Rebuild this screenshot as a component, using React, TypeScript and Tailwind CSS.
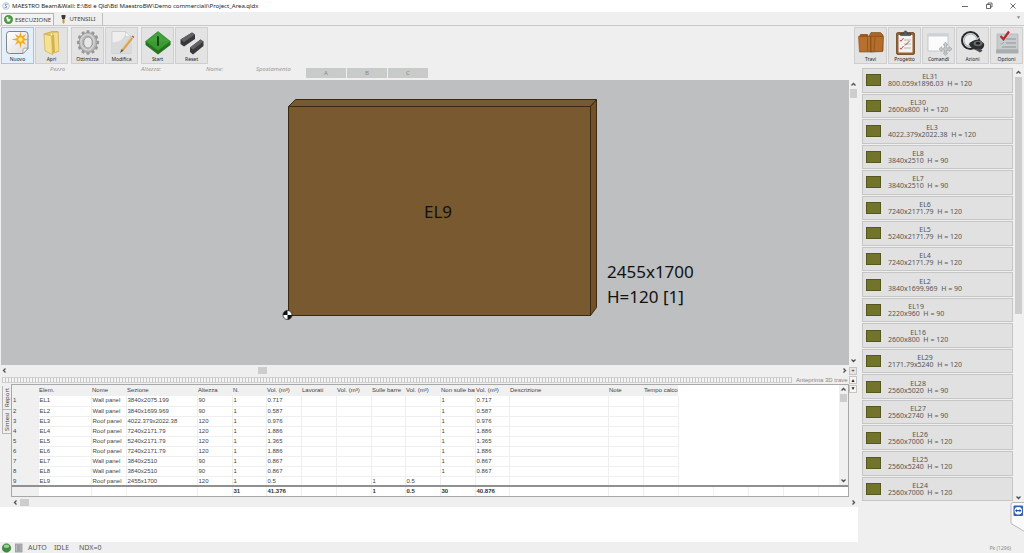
import React, { useState } from "react";

type Item = { name: string; size: string; h: number };

const items: Item[] = [
  { name: "EL31", size: "800.059x1896.03", h: 120 },
  { name: "EL30", size: "2600x800", h: 120 },
  { name: "EL3", size: "4022.379x2022.38", h: 120 },
  { name: "EL8", size: "3840x2510", h: 90 },
  { name: "EL7", size: "3840x2510", h: 90 },
  { name: "EL6", size: "7240x2171.79", h: 120 },
  { name: "EL5", size: "5240x2171.79", h: 120 },
  { name: "EL4", size: "7240x2171.79", h: 120 },
  { name: "EL2", size: "3840x1699.969", h: 90 },
  { name: "EL19", size: "2220x960", h: 90 },
  { name: "EL16", size: "2600x800", h: 120 },
  { name: "EL29", size: "2171.79x5240", h: 120 },
  { name: "EL28", size: "2560x5020", h: 90 },
  { name: "EL27", size: "2560x2740", h: 90 },
  { name: "EL26", size: "2560x7000", h: 120 },
  { name: "EL25", size: "2560x5240", h: 120 },
  { name: "EL24", size: "2560x7000", h: 120 },
];

const headers = [
  "", "Elem.", "Nome", "Sezione", "Altezza", "N.", "Vol. (m³)", "Lavorati", "Vol. (m³)",
  "Sulle barre", "Vol. (m³)", "Non sulle bar", "Vol. (m³)", "Descrizione", "Note", "Tempo calcol",
];

const row = (i: number, name: string, size: string, h: string, vol: string, placed = false) => [
  String(i), "EL" + i, name, size, h, "1", vol, "", "",
  placed ? "1" : "", placed ? vol : "", placed ? "" : "1", placed ? "" : vol, "", "", "",
];

const rows = [
  row(1, "Wall panel", "3840x2075.199", "90", "0.717"),
  row(2, "Wall panel", "3840x1699.969", "90", "0.587"),
  row(3, "Roof panel", "4022.379x2022.38", "120", "0.976"),
  row(4, "Roof panel", "7240x2171.79", "120", "1.886"),
  row(5, "Roof panel", "5240x2171.79", "120", "1.365"),
  row(6, "Roof panel", "7240x2171.79", "120", "1.886"),
  row(7, "Wall panel", "3840x2510", "90", "0.867"),
  row(8, "Wall panel", "3840x2510", "90", "0.867"),
  row(9, "Roof panel", "2455x1700", "120", "0.5", true),
];

const totals = ["", "", "", "", "", "31", "41.376", "", "", "1", "0.5", "30", "40.876", "", "", "", "", "", "", "", ""];

function Columns({ extended }: { extended?: boolean }) {
  return (
    <colgroup>
      <col className="w-[26px]" />
      <col className="w-[53px]" />
      <col className="w-[35px]" />
      <col className="w-[71px]" />
      <col className="w-[35px]" />
      <col className="w-[34px]" />
      <col className="w-[35px]" />
      <col className="w-[35px]" />
      <col className="w-[35px]" />
      <col className="w-[34px]" />
      <col className="w-[35px]" />
      <col className="w-[35px]" />
      <col className="w-[34px]" />
      <col className="w-[99px]" />
      <col className="w-[35px]" />
      <col className="w-[35px]" />
      {extended && (
        <>
          <col className="w-[35px]" />
          <col className="w-[35px]" />
          <col className="w-[35px]" />
          <col className="w-[35px]" />
          <col />
        </>
      )}
    </colgroup>
  );
}

function Arrow({ dir }: { dir: "up" | "down" | "left" | "right" }) {
  const d = {
    up: "M2.500 5.500 4.500 3.500 6.500 5.500",
    down: "M2.500 3.500 4.500 5.500 6.500 3.500",
    left: "M5.500 2.500 3.500 4.500 5.500 6.500",
    right: "M3.500 2.500 5.500 4.500 3.500 6.500",
  }[dir];
  return (
    <button aria-label={dir} className="block size-[9px] shrink-0">
      <svg viewBox="0 0 9 9" className="size-[9px]" fill="none" stroke="#505050" strokeWidth="1.3">
        <path d={d} />
      </svg>
    </button>
  );
}

function VScroll({ thumb }: { thumb: string }) {
  return (
    <div className="flex w-[9px] shrink-0 flex-col bg-[#f0f0f0]">
      <Arrow dir="up" />
      <div className="min-h-0 flex-1">
        <div className={"mx-px bg-[#cdcdcd] " + thumb} />
      </div>
      <Arrow dir="down" />
    </div>
  );
}

function ToolButton({ label, active, children }: { label: string; active?: boolean; children: React.ReactNode }) {
  return (
    <button
      className={
        "flex h-[37px] w-[33px] flex-col items-center border pt-[2px] " +
        (active ? "border-[#a3c4e6] bg-[#e3effa]" : "border-[#cfcfcf] bg-[#e3e3e3]")
      }
    >
      <svg viewBox="0 0 28 26" className="h-[26px] w-[28px]">{children}</svg>
      <span className="text-[5px] leading-[7px] text-[#222]">{label}</span>
    </button>
  );
}

const gearTeeth = Array.from({ length: 12 }, (_, i) => i * 30);

function NewIcon() {
  return (
    <>
      <defs>
        <linearGradient id="paper" x1="0" y1="0" x2="1" y2="1">
          <stop offset="0" stopColor="#ffffff" />
          <stop offset="1" stopColor="#dcdcdc" />
        </linearGradient>
      </defs>
      <path d="M5 1.5h16a3 3 0 0 1 3 3v14l-5 5H5.500a3 3 0 0 1-3-3V4.500a3 3 0 0 1 2.500-3z" fill="url(#paper)" stroke="#777" strokeWidth="0.9" />
      <path d="M24 18.500c-2-.6-4-.4-4.600.3-.6.700-.4 3-.4 4.700z" fill="#f8f8f8" stroke="#888" strokeWidth="0.7" />
      <path d="m16.500 1.500 1.200 5 4.300-2.600-2.500 4.400 6 1.200-6 1.300 2.500 4.300-4.300-2.500-1.200 6-1.300-6-4.300 2.500 2.500-4.300-6-1.300 6-1.200-2.500-4.400 4.300 2.600z" fill="#f0a818" />
      <circle cx="16.500" cy="9.500" r="2.300" fill="#ffe27a" />
    </>
  );
}

function OpenIcon() {
  return (
    <>
      <path d="M6 4 14 1.500h6l.5 20L12 23z" fill="#e4c766" stroke="#b99a3d" strokeWidth="0.6" />
      <path d="M13 3.500 19 2v19l-6 1.500z" fill="#faf3d2" />
      <path d="m14.500 3 5.500-1 1 19-5.500 2z" fill="#f1dc8c" stroke="#c9aa4c" strokeWidth="0.5" />
      <path d="m6 4 7.500 1.800 1 18.700L7 21z" fill="#f5e28f" stroke="#c3a448" strokeWidth="0.6" />
      <path d="M13.500 5.800 16 4.500 17 22l-2.500 2.500z" fill="#d2b14e" />
    </>
  );
}

function GearIcon() {
  return (
    <>
      <g fill="#999" transform="translate(14 12.500) scale(.9 1)">
        {gearTeeth.map((a) => (
          <rect key={a} x="-1.700" y="-12.300" width="3.400" height="5" rx="0.800" transform={`rotate(${a})`} />
        ))}
      </g>
      <ellipse cx="14" cy="12.500" rx="9" ry="10" fill="#b6b6b6" stroke="#8d8d8d" strokeWidth="0.6" />
      <ellipse cx="13.500" cy="12" rx="6.600" ry="7.600" fill="none" stroke="#d2d2d2" strokeWidth="1.600" />
      <ellipse cx="14" cy="12.500" rx="4.300" ry="5.600" fill="#e7e7e7" stroke="#868686" strokeWidth="0.8" />
    </>
  );
}

function EditIcon() {
  return (
    <>
      <path d="M4 1.500h13l6 5v17H4z" fill="#eeeeee" stroke="#c4c4c4" strokeWidth="0.7" />
      <path d="M4 23.500V12c6 1 12-2 14-10l5 5v16.500z" fill="#d9dadb" />
      <path d="M17 1.500c1 2 .7 4 .2 5 2-.5 4-.4 5.800.3z" fill="#fafafa" stroke="#c0c0c0" strokeWidth="0.5" />
      <path d="m24 8-9.500 12" stroke="#d9a04e" strokeWidth="2.600" />
      <path d="m23.300 7.500-9.500 12" stroke="#f0c880" strokeWidth="0.8" />
      <path d="m13.500 19 2 1.700-3.500 2.300z" fill="#555" />
      <path d="m23.500 6.500 2 1.700.8-1.500-1.400-1.200z" fill="#bd5a4a" />
    </>
  );
}

function StartIcon() {
  return (
    <>
      <path d="M1.500 11.500v3.500L14 24.500 26.500 15v-3.500z" fill="#26731f" />
      <path d="M14 1.500 26.500 11.500 14 20.500 1.500 11.500z" fill="#3b9a32" stroke="#2c7d26" strokeWidth="0.6" />
      <path d="M14 2.500 24.800 11.500H3.200z" fill="#49a83e" opacity=".6" />
      <path d="M14 6.200v9.600" stroke="#173f14" strokeWidth="1.800" />
    </>
  );
}

function ResetIcon() {
  return (
    <g strokeLinejoin="round">
      <path d="M2.500 9.500 14 2.500l3 2v4.500L6 16.500l-3.500-2.500z" fill="#38393b" />
      <path d="M2.500 9.500 14 2.500l3 2L6 12z" fill="#606265" />
      <path d="M12 17.500 22.500 9.500l3 2V16L15 24.500 12 22z" fill="#38393b" />
      <path d="M12 17.500 22.500 9.500l3 2L15 19.500z" fill="#606265" />
    </g>
  );
}

function FolderIcon() {
  return (
    <>
      <path d="M2 6.500 3.500 4h7l1.500 2.500V22H3.500z" fill="#9b5a20" />
      <path d="M12.500 5 14 2.500h9.500L26 5v16L13 22z" fill="#a9652a" stroke="#7c4413" strokeWidth="0.6" />
      <path d="M1.500 6.500h12V22H2.500z" fill="#b8702e" stroke="#83490f" strokeWidth="0.6" />
      <path d="M14 6.500h12.500L25.500 21.500 14 22z" fill="#b56d2c" stroke="#83490f" strokeWidth="0.6" />
      <path d="M10.500 7.500v14M18 7l-1 14.500" stroke="#8f5318" strokeWidth="0.8" />
    </>
  );
}

function ClipboardIcon() {
  return (
    <>
      <rect x="5.500" y="2.500" width="18" height="22" rx="1.500" fill="#9a5f2e" stroke="#5e3815" strokeWidth="0.7" />
      <path d="M7.500 5h14v17.500h-14z" fill="#f4f2ee" />
      <path d="M9.500 5.500V3.500h3c0-3.500 4-3.500 4 0h3v2z" fill="#555b60" stroke="#34383c" strokeWidth="0.6" />
      <path d="M13 10h7M13 14h7M13 18h7" stroke="#a8a8a8" strokeWidth="0.8" />
      <path d="m9 10 1 1.300L12.500 8M9 18l1 1.300 2.500-3.300" stroke="#c0504d" strokeWidth="1" fill="none" />
      <path d="m14 15.500 4.500-4.500" stroke="#8c5a50" strokeWidth="1" />
    </>
  );
}

function CommandsIcon() {
  return (
    <>
      <rect x="3" y="4" width="20" height="17" fill="#fbfbfb" stroke="#b4b8bb" strokeWidth="0.7" />
      <path d="M3 4h20v2.500H3z" fill="#cdd1d4" />
      <path d="m20.500 12 2.300 3h-1.300v3h3v-1.300l2.500 2.300-2.500 2.300V20h-3v3h1.300l-2.300 2.500-2.300-2.500h1.300v-3h-3v1.300L14 19l2.500-2.300V18h3v-3h-1.300z" fill="#c8cbce" stroke="#8d9297" strokeWidth="0.5" />
    </>
  );
}

function ActionsIcon() {
  return (
    <>
      <circle cx="11.500" cy="10.500" r="8.500" fill="#eceeef" stroke="#29292b" strokeWidth="2" />
      <circle cx="11.500" cy="10.500" r="6.400" fill="none" stroke="#9da1a4" strokeWidth="0.8" />
      <path d="M8 16 21 7" stroke="#c4c8ca" strokeWidth="1.200" />
      <path d="M10 14c2-3 7-5 11-4l4 3.500c.7 3-1 6-5 6.500-4 .4-9-2-10-6z" fill="#2d2e30" />
      <ellipse cx="19" cy="13.500" rx="4.500" ry="2.700" fill="#64686b" />
      <ellipse cx="19" cy="13.200" rx="2.200" ry="1.200" fill="#1d1d1f" />
      <path d="m15 19 6 3.500 2.500-1.700-2-2z" fill="#4a4c4f" />
    </>
  );
}

function OptionsIcon() {
  return (
    <>
      <path d="M4 4h21v15.500H4z" fill="#c9cccd" stroke="#a9acae" strokeWidth="0.6" />
      <path d="M3 19.500h22.500v4H3z" fill="#a9adaf" />
      <path d="M13 9h10M13 13h10M9 17h14" stroke="#8b9093" strokeWidth="0.900" />
      <path d="m7.500 6 3 3.200L16 1.500" stroke="#b6262c" strokeWidth="2.200" fill="none" />
      <path d="m7.500 13 1.200 1.200L11 12" stroke="#9da1a3" strokeWidth="0.900" fill="none" />
    </>
  );
}

function Tab({ label, width, selected, onClick, children }: { label: string; width: string; selected: boolean; onClick: () => void; children: React.ReactNode }) {
  return (
    <button
      onClick={onClick}
      className={
        "flex h-[12px] items-center justify-center gap-[2px] border-r text-[6px] leading-[10px] text-[#444] " +
        width + " " +
        (selected ? "border-t border-l border-[#b4b4b4] bg-[#f3f3f3]" : "border-[#bdbdbd]")
      }
    >
      {children}
      {label}
    </button>
  );
}

function PanelDrawing() {
  return (
    <svg viewBox="0 0 848 283" className="absolute inset-0 size-full" fontFamily='"Noto Sans", sans-serif' fontSize="17" fill="#111">
      <g stroke="#3b2a12" strokeWidth="1" strokeLinejoin="round">
        <path d="M287.500 25.500 294.500 18.500H595.500L589.500 25.500z" fill="#775a31" />
        <path d="M589.500 25.500 595.500 18.500V226.500L589.500 234.500z" fill="#745228" />
        <path d="M287.500 25.500H589.500V234.500H287.500z" fill="#785930" />
      </g>
      <text x="437" y="137" textAnchor="middle">EL9</text>
      <text x="606" y="197">2455x1700</text>
      <text x="606" y="222">H=120 [1]</text>
      <circle cx="286.500" cy="234" r="4.500" fill="#fff" stroke="#111" strokeWidth="0.700" />
      <path d="M286.500 234h-4.500a4.500 4.500 0 0 1 4.500-4.500zM286.500 234h4.500a4.500 4.500 0 0 1-4.500 4.500z" />
    </svg>
  );
}

export default function App() {
  const [tab, setTab] = useState("ESECUZIONE");
  return (
    <div className="flex min-h-screen flex-col overflow-hidden bg-[#efefef] font-['Noto_Sans','Open_Sans',sans-serif] text-[7px] leading-[8px] text-[#444]">
      <header className="flex h-[12px] items-center bg-white pl-[2px]">
        <svg viewBox="0 0 8 8" className="size-[8px]" fill="none" stroke="#8fb0c8">
          <circle cx="4" cy="4" r="3.300" strokeWidth="0.700" />
          <path d="M5.500 2.500c-3-1-3 1-1.500 1.500s1.500 2-1.500 1.300" stroke="#5b8cb0" />
        </svg>
        <h1 className="ml-[2px] flex-1 text-[6px] leading-[12px] whitespace-nowrap text-[#222]">
          MAESTRO Beam&amp;Wall: E:\Btl e Qld\Btl MaestroBW\Demo commerciali\Project_Area.qldx
        </h1>
        <div className="flex items-center gap-[16px] pr-[7px]">
          {["M1 4.500h6", "M1.500 2.500h4v4h-4zM3 2.500V1h4v4H5.500", "M1.500 1.500l5 5M6.500 1.500l-5 5"].map((d, i) => (
            <button key={d} aria-label={["Riduci", "Ripristina", "Chiudi"][i]}>
              <svg viewBox="0 0 8 8" className="size-[8px]" fill="none" stroke="#444" strokeWidth="0.800">
                <path d={d} />
              </svg>
            </button>
          ))}
        </div>
      </header>

      <nav className="flex h-[14px] items-start border-b border-[#c8c8c8] pt-px pl-px">
        <Tab label="ESECUZIONE" width="w-[53px]" selected={tab === "ESECUZIONE"} onClick={() => setTab("ESECUZIONE")}>
          <svg viewBox="0 0 9 9" className="size-[9px]">
            <circle cx="4.500" cy="4.500" r="4.200" fill="#4b9b3f" stroke="#39752f" strokeWidth="0.500" />
            <path d="m2 2.500 2.200-.8.300 2.300 2.300-.3-1 2.700-2.300.3z" fill="#e9f5e4" />
          </svg>
        </Tab>
        <Tab label="UTENSILI" width="w-[49px]" selected={tab === "UTENSILI"} onClick={() => setTab("UTENSILI")}>
          <svg viewBox="0 0 7 9" className="h-[9px] w-[7px]">
            <path d="M1.500 0h4v2.500H5V4H2V2.500h-.5z" fill="#3a3a3a" />
            <path d="M2.500 4h2v3.500L3.500 9l-1-1.500z" fill="#c79a35" />
          </svg>
        </Tab>
        <span className="ml-auto pr-[3px] text-[5px] text-[#888]">▼</span>
      </nav>

      <div className="flex items-start justify-between px-px pt-px">
        <div className="flex gap-[3px]">
          <div className="flex gap-px">
            <ToolButton label="Nuovo" active><NewIcon /></ToolButton>
            <ToolButton label="Apri"><OpenIcon /></ToolButton>
          </div>
          <div className="flex gap-px">
            <ToolButton label="Ottimizza"><GearIcon /></ToolButton>
            <ToolButton label="Modifica"><EditIcon /></ToolButton>
          </div>
          <div className="flex gap-px">
            <ToolButton label="Start"><StartIcon /></ToolButton>
            <ToolButton label="Reset"><ResetIcon /></ToolButton>
          </div>
        </div>
        <div className="flex gap-px">
          <ToolButton label="Travi"><FolderIcon /></ToolButton>
          <ToolButton label="Progetto"><ClipboardIcon /></ToolButton>
          <ToolButton label="Comandi"><CommandsIcon /></ToolButton>
          <ToolButton label="Azioni"><ActionsIcon /></ToolButton>
          <ToolButton label="Opzioni"><OptionsIcon /></ToolButton>
        </div>
      </div>

      <div className="relative flex flex-1">
        <main className="flex min-w-0 flex-1 flex-col">
          <div className="flex h-[16px] items-start pl-[50px] text-[6px] text-[#999] italic">
            <span className="w-[91px] pt-px">Pezzo</span>
            <span className="w-[65px] pt-px">Altezza:</span>
            <span className="w-[50px] pt-px">Nome:</span>
            <span className="w-[50px] pt-px">Spostamento</span>
            <div className="flex gap-px pt-[4px] not-italic">
              {["A", "B", "C"].map((l) => (
                <button key={l} className="h-[10px] w-[40px] bg-[#c9caca] leading-[10px] text-[#888]">{l}</button>
              ))}
            </div>
          </div>

          <div className="flex min-h-[200px] flex-1">
            <section className="relative ml-px flex-1 bg-[#bdbfc1]">
              <PanelDrawing />
            </section>
            <VScroll thumb="h-[9px]" />
          </div>

          <div className="flex">
            <div className="min-w-0 flex-1">
              <div className="flex h-[10px] items-center">
                <Arrow dir="left" />
                <div className="flex flex-1 justify-center">
                  <div className="mr-[324px] h-[7px] w-[9px] bg-[#cdcdcd]" />
                </div>
                <Arrow dir="right" />
              </div>
              <div className="flex h-[9px] items-center gap-[4px] pl-[2px]">
                <div className="h-[6px] flex-1 border-y border-[#d0d0d0] bg-[repeating-linear-gradient(90deg,#c6c6c6_0_1px,#f4f4f4_1px_3px)]" />
                <span className="w-[53px] font-['Liberation_Sans',sans-serif] text-[6px] whitespace-nowrap text-[#888]">Anteprima 3D trave</span>
              </div>
            </div>
            <div className="flex w-[9px] flex-col gap-px pt-[2px] text-[6px] text-[#222]">
              <button className="h-[8px] w-[8px] border border-[#c4c4c4] bg-[#e6e6e6] leading-[5px]">+</button>
              <button className="h-[8px] w-[8px] border border-[#c4c4c4] bg-[#f6f6f6] text-[5px] leading-[5px]">▲</button>
            </div>
          </div>

          <div className="flex">
            <div className="flex w-[11px] flex-col items-end pt-[2px]">
              {["Report", "Sintesi"].map((t) => (
                <button key={t} className="h-[24px] w-[9px] rotate-180 border-t border-r border-[#b8b8b8] text-center text-[6px] leading-[8px] [writing-mode:vertical-rl]">
                  {t}
                </button>
              ))}
            </div>
            <div className="min-w-0 flex-1 border border-[#a6a8a9] bg-white font-['Liberation_Sans',sans-serif]">
              <div className="flex h-[100px] overflow-hidden">
                <div className="min-w-0 flex-1 overflow-hidden">
                  <table className="w-[666px] table-fixed border-collapse text-[6px] leading-[9px]">
                    <Columns />
                    <thead>
                      <tr className="h-[11px] bg-[#f0f0f0] text-left">
                        {headers.map((h, i) => (
                          <th key={i} className="overflow-hidden p-0 pl-px font-normal whitespace-nowrap">{h}</th>
                        ))}
                      </tr>
                    </thead>
                    <tbody>
                      {rows.map((r) => (
                        <tr key={r[0]} className="h-[10px]">
                          {r.map((c, i) => (
                            <td
                              key={i}
                              className={
                                "overflow-hidden border-r border-b border-[#efefef] p-0 pl-px whitespace-nowrap " +
                                (i === 0 ? "bg-[#f0f0f0]" : "")
                              }
                            >
                              {c}
                            </td>
                          ))}
                        </tr>
                      ))}
                    </tbody>
                  </table>
                </div>
                <VScroll thumb="h-[8px]" />
              </div>
              <table className="w-full table-fixed border-collapse border-t-2 border-[#909090] text-[6px] leading-[9px] font-bold text-[#333]">
                <Columns extended />
                <tbody>
                  <tr className="h-[10px]">
                    {totals.map((c, i) => (
                      <td key={i} className={"border-r border-[#efefef] p-0 pl-px last:border-r-0 " + (i === 0 ? "bg-[#f0f0f0]" : "")}>{c}</td>
                    ))}
                  </tr>
                </tbody>
              </table>
            </div>
            <div className="w-[9px]">
              <button className="h-[8px] w-[8px] border border-[#c4c4c4] bg-[#f6f6f6] text-[5px] leading-[5px] text-[#222]">▼</button>
            </div>
          </div>

          <div className="flex h-[10px] items-center pl-[11px]">
            <Arrow dir="left" />
            <div className="flex-1">
              <div className="h-[7px] w-[9px] bg-[#cdcdcd]" />
            </div>
            <Arrow dir="right" />
          </div>
          <div className="h-[35px] bg-white" />
        </main>

        <aside className="flex w-[166px] shrink-0 pt-[4px] pb-[40px] pl-[4px]">
          <ul className="flex flex-1 flex-col">
            {items.map((it) => (
              <li key={it.name} className="flex flex-1 pb-px">
                <button className="flex w-full items-center gap-[7px] border border-[#c6c6c6] bg-[#e1e1e1] pl-[3px]">
                  <span className="h-[12px] w-[15px] border border-[#55571f] bg-[#73742c]" />
                  <span className="text-center text-[7px] leading-[7px] whitespace-pre text-[#555]">
                    {it.name}
                    <br />
                    {it.size + "  H = " + it.h}
                  </span>
                </button>
              </li>
            ))}
          </ul>
          <div className="flex w-[11px] pl-px">
            <VScroll thumb="h-[57%]" />
          </div>
        </aside>

        <button aria-label="TeamViewer" className="absolute right-0 bottom-[10px] h-[30px] w-[14px]">
          <svg viewBox="0 0 14 30" className="h-[30px] w-[14px]">
            <path d="M14.500.5H3a2 2 0 0 0-2 2v19l13.500 8z" fill="#fafafa" stroke="#b5b8ba" />
            <rect x="3.500" y="3.500" width="9.500" height="10.500" rx="1" fill="#2d64b3" />
            <circle cx="8.300" cy="8.700" r="3.800" fill="#fff" />
            <path d="m5 8.700 2-1.600v1h2.600v-1l2 1.600-2 1.600v-1H7v1z" fill="#1e4f99" />
          </svg>
        </button>
      </div>

      <footer className="flex h-[11px] items-center pr-[13px] pl-[2px] text-[7px] leading-[10px] text-[#555]">
        <svg viewBox="0 0 22 10" className="mr-[4px] h-[10px] w-[22px]">
          <circle cx="4.500" cy="5" r="4.300" fill="#3c8f3a" stroke="#2e6d2b" strokeWidth="0.500" />
          <ellipse cx="4.500" cy="3.200" rx="2.800" ry="1.700" fill="#9ed294" />
          <rect x="13.500" y="1" width="6.500" height="8" fill="#b9bcbe" stroke="#8b8e90" strokeWidth="0.700" />
          <path d="M15 3h3.500M15 5h3.500M15 7h3.500" stroke="#75787a" strokeWidth="0.700" />
        </svg>
        <span className="w-[26px]">AUTO</span>
        <span className="w-[25px]">IDLE</span>
        <span>NDX=0</span>
        <span className="ml-auto text-[5px] text-[#888]">Pk (1296)</span>
      </footer>
    </div>
  );
}
